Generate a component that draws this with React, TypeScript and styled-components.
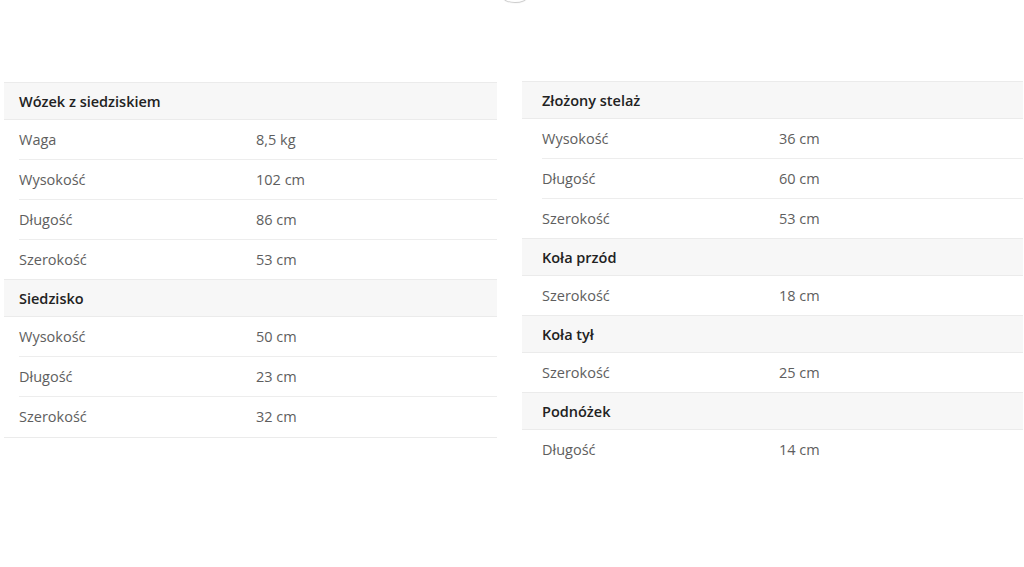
import styled, { createGlobalStyle } from 'styled-components';

const GlobalStyle = createGlobalStyle`
  html, body {
    margin: 0;
    padding: 0;
    background: #ffffff;
  }
  body {
    font-family: "Open Sans", "DejaVu Sans", sans-serif;
    color: #555;
  }
`;

type Row = { label: string; value: string };
type Section = { title: string; rows: Row[] };

const leftTable: Section[] = [
  {
    title: 'Wózek z siedziskiem',
    rows: [
      { label: 'Waga', value: '8,5 kg' },
      { label: 'Wysokość', value: '102 cm' },
      { label: 'Długość', value: '86 cm' },
      { label: 'Szerokość', value: '53 cm' },
    ],
  },
  {
    title: 'Siedzisko',
    rows: [
      { label: 'Wysokość', value: '50 cm' },
      { label: 'Długość', value: '23 cm' },
      { label: 'Szerokość', value: '32 cm' },
    ],
  },
];

const rightTable: Section[] = [
  {
    title: 'Złożony stelaż',
    rows: [
      { label: 'Wysokość', value: '36 cm' },
      { label: 'Długość', value: '60 cm' },
      { label: 'Szerokość', value: '53 cm' },
    ],
  },
  { title: 'Koła przód', rows: [{ label: 'Szerokość', value: '18 cm' }] },
  { title: 'Koła tył', rows: [{ label: 'Szerokość', value: '25 cm' }] },
  { title: 'Podnóżek', rows: [{ label: 'Długość', value: '14 cm' }] },
];

export default function App() {
  return (
    <Page>
      <GlobalStyle />
      <SliderDot />
      <Columns>
        <SpecTable sections={leftTable} inset={15} closed />
        <SpecTable sections={rightTable} inset={20} raised />
      </Columns>
    </Page>
  );
}

const SpecTable = ({
  sections,
  inset,
  closed,
  raised,
}: {
  sections: Section[];
  inset: number;
  closed?: boolean;
  raised?: boolean;
}) => {
  return (
    <Table $closed={closed} $raised={raised}>
      {sections.map((s) => (
        <div key={s.title}>
          <HeaderRow $inset={inset}>{s.title}</HeaderRow>
          {s.rows.map((r, i) => (
            <DataRow key={i} $inset={inset}>
              <Label>{r.label}</Label>
              <Value>{r.value}</Value>
            </DataRow>
          ))}
        </div>
      ))}
    </Table>
  );
};

const Page = styled.div`
  position: relative;
  width: 1024px;
  height: 567px;
  overflow: hidden;
  padding-top: 83px;
  box-sizing: border-box;
`;

const SliderDot = styled.div`
  position: absolute;
  top: -9px;
  left: 503px;
  width: 24px;
  height: 11px;
  border-radius: 50%;
  background: #fff;
  box-shadow: 0 1px 1px rgba(0, 0, 0, 0.22);
`;

const Columns = styled.div`
  display: grid;
  grid-template-columns: 493fr 501fr;
  column-gap: 25px;
  padding: 0 1px 0 4px;
  align-items: start;
`;

const Table = styled.div<{ $closed?: boolean; $raised?: boolean }>`
  border-bottom: ${(p) => (p.$closed ? '1px solid #ebebeb' : 'none')};
  margin-top: ${(p) => (p.$raised ? '-1px' : '0')};
`;

const HeaderRow = styled.div<{ $inset: number }>`
  position: relative;
  height: 38px;
  margin-top: -1px;
  box-sizing: border-box;
  display: flex;
  align-items: center;
  padding-left: ${(p) => p.$inset}px;
  background: #f7f7f7;
  border-top: 1px solid #ebebeb;
  border-bottom: 1px solid #ebebeb;
  font-size: 14.5px;
  font-weight: 600;
  color: #222;
`;

const DataRow = styled.div<{ $inset: number }>`
  display: grid;
  grid-template-columns: 237px 1fr;
  align-items: center;
  height: 40px;
  box-sizing: border-box;
  margin-left: ${(p) => p.$inset}px;
  border-bottom: 1px solid #ededed;
  font-size: 14.5px;
  color: #5e5e5e;

  &:last-child {
    border-bottom-color: transparent;
  }
`;

const Label = styled.span`
  white-space: nowrap;
`;

const Value = styled.span`
  white-space: nowrap;
`;
